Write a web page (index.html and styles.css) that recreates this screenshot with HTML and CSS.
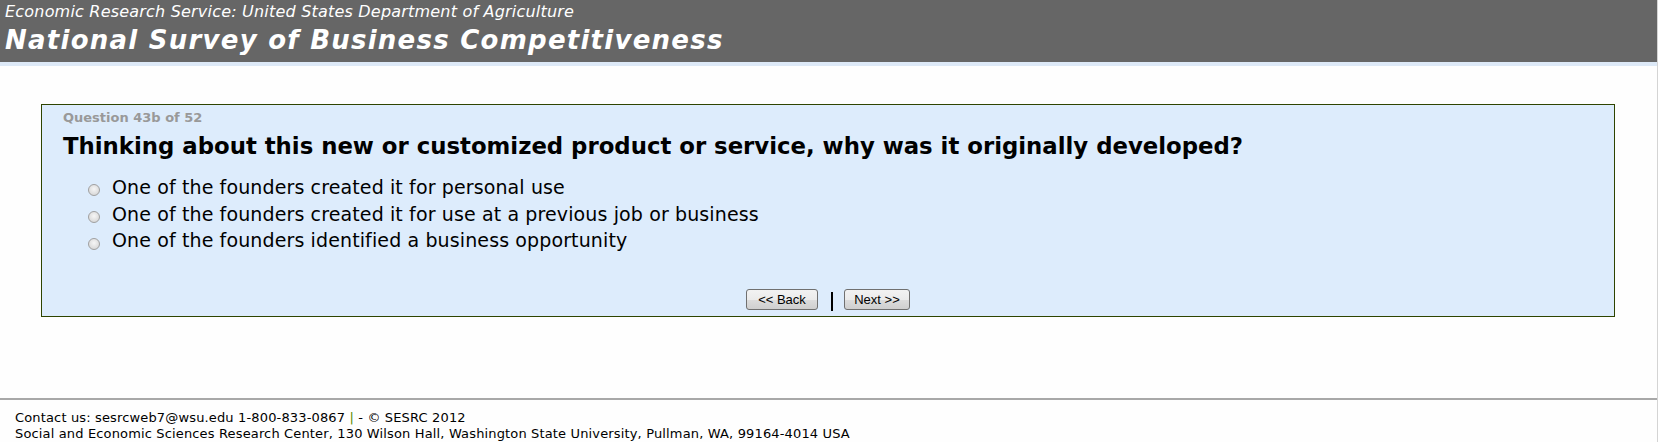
FILE: index.html
```html
<!DOCTYPE html>
<html lang="en">
<head>
    <meta charset="UTF-8">
    <title>National Survey of Business Competitiveness</title>
    <link rel="stylesheet" href="styles.css">
</head>
<body>
    <div class="page">
        <div class="header">
            <div class="agency">Economic Research Service: United States Department of Agriculture</div>
            <div class="survey-title">National Survey of Business Competitiveness</div>
        </div>
        <div class="header-strip"></div>

        <form class="question-box">
            <div class="question-number">Question 43b of 52</div>
            <h2 class="question-text">Thinking about this new or customized product or service, why was it originally developed?</h2>
            <div class="options">
                <label class="option"><input type="radio" name="q43b"> One of the founders created it for personal use</label>
                <label class="option"><input type="radio" name="q43b"> One of the founders created it for use at a previous job or business</label>
                <label class="option"><input type="radio" name="q43b"> One of the founders identified a business opportunity</label>
            </div>
            <div class="nav-buttons">
                <button type="button" class="nav-button back">&lt;&lt; Back</button>
                <span class="nav-sep"></span>
                <button type="button" class="nav-button next">Next &gt;&gt;</button>
            </div>
        </form>

        <div class="footer">
            <div>Contact us: sesrcweb7@wsu.edu 1-800-833-0867 <span class="pipe">|</span> - &copy; SESRC 2012</div>
            <div>Social and Economic Sciences Research Center, 130 Wilson Hall, Washington State University, Pullman, WA, 99164-4014 USA</div>
        </div>
    </div>
</body>
</html>
```

FILE: styles.css
```css
/* General */
body {
    margin: 0;
    background: #fff;
    font-family: "DejaVu Sans", Verdana, sans-serif;
}

.page {
    width: 1657px;
    height: 442px;
    border-right: 1px solid #d4d4d4;
    background: #fefefe;
}

/* Header */
.header {
    background: #666666;
    height: 61px;
    padding: 1px 0 0 5px;
    color: #fff;
    font-style: italic;
}

.agency {
    font-size: 16px;
    line-height: 22px;
    letter-spacing: 0.2px;
}

.survey-title {
    margin-top: 1px;
    font-size: 26px;
    font-weight: bold;
    line-height: 32px;
    letter-spacing: 1.25px;
}

.header-strip {
    height: 4px;
    background: #dde9f7;
}

/* Question box */
.question-box {
    margin: 38px 42px 0 41px;
    height: 211px;
    background: #ddecfc;
    border: 1px solid #2e4400;
    padding: 0 21px;
}

.question-number {
    color: #999;
    font-size: 13px;
    line-height: 16px;
    font-weight: bold;
    margin-top: 5px;
}

.question-text {
    margin: 6px 0 0 0;
    font-size: 22.8px;
    line-height: 28px;
    font-weight: bold;
    color: #000;
}

.options {
    margin-top: 14px;
    padding-left: 25px;
    display: flex;
    flex-direction: column;
}

.option {
    font-size: 19px;
    line-height: 26.7px;
    letter-spacing: 0.12px;
    display: flex;
    align-items: center;
    gap: 12px;
}

.option input {
    appearance: none;
    width: 12px;
    height: 12px;
    margin: 6px 0 0 0;
    border: 1px solid #a0a0a0;
    border-radius: 50%;
    background: radial-gradient(circle at 50% 40%, #f6f6f6, #d0d0d0);
}

/* Back / Next */
.nav-buttons {
    margin-top: 34px;
    display: flex;
    justify-content: center;
    align-items: center;
}

.nav-button {
    font-family: "Liberation Sans", Arial, sans-serif;
    font-size: 13px;
    height: 21px;
    padding: 0;
    border: 1px solid #707070;
    border-radius: 3px;
    background: linear-gradient(#f2f2f2, #ebebeb 50%, #dddddd 51%, #cfcfcf);
    color: #000;
}

.nav-button.back {
    width: 72px;
}

.nav-button.next {
    width: 66px;
}

.nav-sep {
    width: 2px;
    height: 19px;
    background: #000;
    margin: 4px 11px 0 13px;
}

/* Footer */
.footer {
    margin-top: 81px;
    border-top: 2px solid #a8a8a8;
    padding: 10px 0 0 15px;
    font-size: 13px;
    line-height: 16px;
    letter-spacing: 0.15px;
    color: #000;
}

.pipe {
    color: #5a8a00;
}
```
